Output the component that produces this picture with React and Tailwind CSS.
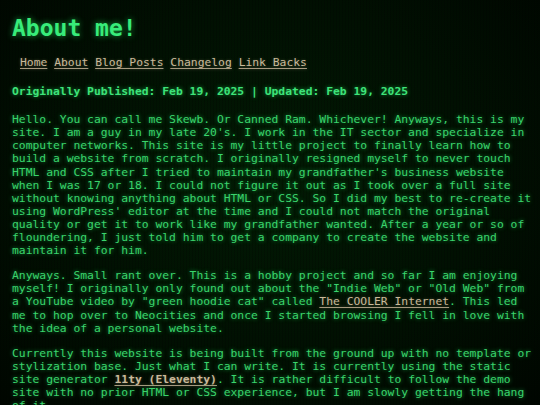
import React from "react";

export default function App() {
  const glow = "[text-shadow:0_0_4px_rgba(40,255,110,0.55)]";
  const link = "underline underline-offset-2 decoration-[#a89a80] text-[#c9b99a] [text-shadow:0_0_3px_rgba(210,190,150,0.35)]";
  return (
    <div className="relative w-[540px] h-[405px] overflow-hidden bg-[radial-gradient(ellipse_at_50%_45%,#021a04_0%,#011002_55%,#000600_100%)] font-['DejaVu_Sans_Mono',monospace] text-[11.35px] leading-[13.1px] text-[#3ad46c]">
      <div className="pointer-events-none absolute inset-0 bg-[repeating-linear-gradient(90deg,rgba(0,0,0,0.18)_0px,rgba(0,0,0,0.18)_1px,transparent_1px,transparent_3px)]" />
      <div className="relative pl-[12px] pr-[6px] pt-[15px]">
        <h1 className="text-[23px] leading-[27px] font-bold text-[#38ec7a] [text-shadow:0_0_6px_rgba(40,255,110,0.6)]">About me!</h1>
        <nav className="mt-[14px] pl-[8px]">
          <a className={link}>Home</a>{" "}
          <a className={link}>About</a>{" "}
          <a className={link}>Blog Posts</a>{" "}
          <a className={link}>Changelog</a>{" "}
          <a className={link}>Link Backs</a>
        </nav>
        <p className={`mt-[16px] font-bold text-[#3ee37a] ${glow}`}>
          Originally Published: Feb 19, 2025 | Updated: Feb 19, 2025
        </p>
        <div className={`mt-[15px] flex flex-col gap-[12px] ${glow}`}>
          <p>
            Hello. You can call me Skewb. Or Canned Ram. Whichever! Anyways, this is my site. I am a guy in my late 20's. I work in the IT sector and specialize in computer networks. This site is my little project to finally learn how to build a website from scratch. I originally resigned myself to never touch HTML and CSS after I tried to maintain my grandfather's business website when I was 17 or 18. I could not figure it out as I took over a full site without knowing anything about HTML or CSS. So I did my best to re-create it using WordPress' editor at the time and I could not match the original quality or get it to work like my grandfather wanted. After a year or so of floundering, I just told him to get a company to create the website and maintain it for him.
          </p>
          <p>
            Anyways. Small rant over. This is a hobby project and so far I am enjoying myself! I originally only found out about the "Indie Web" or "Old Web" from a YouTube video by "green hoodie cat" called{" "}
            <a className={link}>The COOLER Internet</a>. This led me to hop over to Neocities and once I started browsing I fell in love with the idea of a personal website.
          </p>
          <p>
            Currently this website is being built from the ground up with no template or stylization base. Just what I can write. It is currently using the static site generator{" "}
            <a className={`${link} font-bold`}>11ty (Eleventy)</a>. It is rather difficult to follow the demo site with no prior HTML or CSS experience, but I am slowly getting the hang of it.
          </p>
        </div>
      </div>
    </div>
  );
}
